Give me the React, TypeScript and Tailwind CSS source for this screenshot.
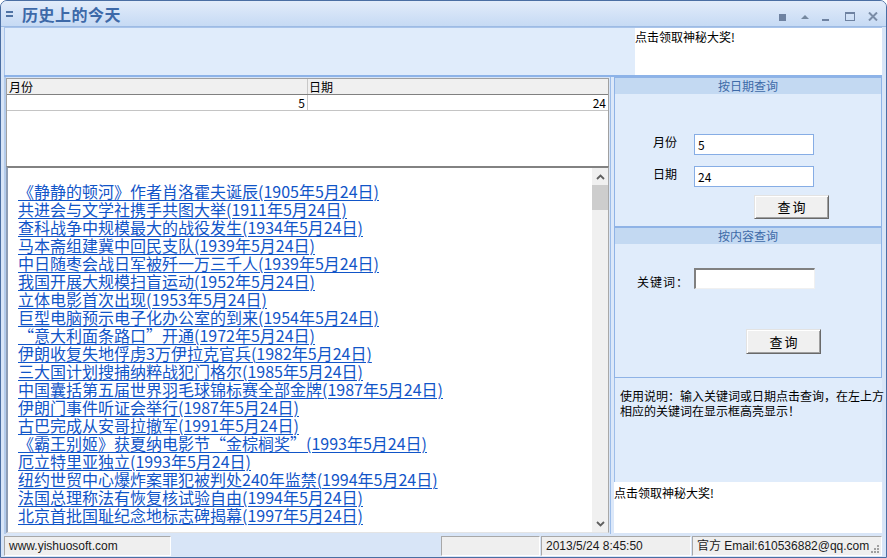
import React from 'react';

const events: string[] = [
  '《静静的顿河》作者肖洛霍夫诞辰(1905年5月24日)',
  '共进会与文学社携手共图大举(1911年5月24日)',
  '查科战争中规模最大的战役发生(1934年5月24日)',
  '马本斋组建冀中回民支队(1939年5月24日)',
  '中日随枣会战日军被歼一万三千人(1939年5月24日)',
  '我国开展大规模扫盲运动(1952年5月24日)',
  '立体电影首次出现(1953年5月24日)',
  '巨型电脑预示电子化办公室的到来(1954年5月24日)',
  '“意大利面条路口”开通(1972年5月24日)',
  '伊朗收复失地俘虏3万伊拉克官兵(1982年5月24日)',
  '三大国计划搜捕纳粹战犯门格尔(1985年5月24日)',
  '中国囊括第五届世界羽毛球锦标赛全部金牌(1987年5月24日)',
  '伊朗门事件听证会举行(1987年5月24日)',
  '古巴完成从安哥拉撤军(1991年5月24日)',
  '《霸王别姬》获夏纳电影节“金棕榈奖”(1993年5月24日)',
  '厄立特里亚独立(1993年5月24日)',
  '纽约世贸中心爆炸案罪犯被判处240年监禁(1994年5月24日)',
  '法国总理称法有恢复核试验自由(1994年5月24日)',
  '北京首批国耻纪念地标志碑揭幕(1997年5月24日)',
];

const TitleBar: React.FC = () => (
  <div className="flex h-[26px] shrink-0 rounded-t-[6px] border-b border-[#9dbbe4] bg-gradient-to-b from-[#e2ecfa] to-[#c6daf4]">
    <div className="ml-[5px] mt-[1px] flex items-center">
      <svg width="7" height="6" viewBox="0 0 7 6" aria-hidden>
        <rect x="0" y="0" width="7" height="2" fill="#4f72a3" />
        <rect x="0" y="4" width="7" height="2" fill="#4f72a3" />
      </svg>
      <span className="ml-[9px] text-[16px] font-bold tracking-[0.5px] text-[#3d69a8]">历史上的今天</span>
    </div>
    <div className="ml-auto mr-[8px] mt-[11px] flex h-[9px] items-end self-start">
      <svg width="7" height="7" viewBox="0 0 7 7" aria-hidden>
        <rect width="7" height="7" fill="#6e82a1" />
      </svg>
      <svg className="mb-[2px] ml-[15px]" width="8" height="5" viewBox="0 0 8 5" aria-hidden>
        <path d="M0 5 L4 1 L8 5 Z" fill="#75889f" />
      </svg>
      <svg className="ml-[13px]" width="7" height="2" viewBox="0 0 7 2" aria-hidden>
        <rect width="7" height="2" fill="#6e82a1" />
      </svg>
      <svg className="ml-[16px]" width="10" height="9" viewBox="0 0 10 9" aria-hidden>
        <rect x="0.5" y="0.5" width="9" height="8" fill="none" stroke="#6e82a1" />
        <rect width="10" height="2" fill="#6e82a1" />
      </svg>
      <svg className="ml-[13px]" width="10" height="9" viewBox="0 0 10 9" aria-hidden>
        <path d="M1 0.5 L9 8.5 M9 0.5 L1 8.5" stroke="#7a8ca6" strokeWidth="2" />
      </svg>
    </div>
  </div>
);

const Button: React.FC<{ className?: string; tall?: boolean }> = ({ className = '', tall }) => (
  <div
    className={`flex w-[75px] items-center justify-center border border-t-[#e3e3e3] border-l-[#e3e3e3] border-r-[#696969] border-b-[#696969] bg-[#f0f0f0] text-[13px] tracking-[2px] shadow-[inset_1px_1px_0_#ffffff,inset_-1px_-1px_0_#a0a0a0] ${tall ? 'h-[25px]' : 'h-[24px]'} ${className}`}
  >
    <span className="pl-[2px]">查询</span>
  </div>
);

const Chevron: React.FC<{ down?: boolean }> = ({ down }) => (
  <svg width="9" height="6" viewBox="0 0 9 6" aria-hidden>
    <path
      d={down ? 'M1 1 L4.5 4.5 L8 1' : 'M1 5 L4.5 1.5 L8 5'}
      fill="none"
      stroke="#5f5f5f"
      strokeWidth="1.8"
    />
  </svg>
);

export default function App() {
  return (
    <div className="h-[558px] w-[887px] overflow-hidden bg-white font-['Noto_Sans_CJK_SC','Noto_Sans',sans-serif] text-[12px] text-black">
      <div className="flex h-full w-full flex-col rounded-t-[7px] border border-[#4a6ea3] bg-[#d8e5f7]">
        <TitleBar />

        <div className="flex flex-1 flex-col pl-[3px] pr-[4px]">
          {/* top strip */}
          <div className="flex h-[50px] border-t border-b-2 border-t-[#a9c4ea] border-b-[#8db3e8]">
            <div className="flex-1 border-l border-[#a9c4ea] bg-[#e0ecfb]" />
            <div className="w-[247px] bg-white pt-[2px] leading-[14px]">点击领取神秘大奖!</div>
          </div>

          {/* middle */}
          <div className="flex h-[457px]">
            <div className="flex w-[606px] flex-col border-l-2 border-[#b3cbeb] py-[1px] pr-[1px]">
              {/* grid */}
              <div className="flex h-[88px] flex-col border-l border-r border-t border-[#a0a0a0] bg-white">
                <div className="flex h-[16px] border-b border-[#808080] bg-[#f0f0f0] leading-[15px]">
                  <div className="w-[301px] border-r border-[#c8c8c8] pl-[2px]">月份</div>
                  <div className="flex-1 pl-[1px]">日期</div>
                </div>
                <div className="flex h-[16px] border-b border-[#c4c4c4] leading-[15px]">
                  <div className="w-[301px] border-r border-[#c8c8c8] pr-[2px] text-right">5</div>
                  <div className="flex-1 pr-[2px] text-right">24</div>
                </div>
              </div>

              {/* list box */}
              <div className="flex h-[367px] border-b border-l-2 border-r border-t-2 border-b-[#e4e4e4] border-l-[#8d9db5] border-r-[#a8a8a8] border-t-[#828282] bg-white">
                <div className="flex-1 overflow-hidden pl-[10px] pt-[14px] text-[16px] leading-[18px] text-[#1155c8]">
                  {events.map((e) => (
                    <div key={e} className="h-[18px] whitespace-nowrap">
                      <span className="underline decoration-1 underline-offset-[2px]">{e}</span>
                    </div>
                  ))}
                </div>
                <div className="flex w-[16px] flex-col bg-[#f0f0f0]">
                  <div className="flex h-[17px] items-center justify-center">
                    <Chevron />
                  </div>
                  <div className="h-[25px] bg-[#cdcdcd]" />
                  <div className="flex-1" />
                  <div className="flex h-[17px] items-center justify-center">
                    <Chevron down />
                  </div>
                </div>
              </div>
            </div>

            {/* separator */}
            <div className="w-[4px] border-l border-[#9dbde9] bg-[#dce8f9]" />

            {/* right column */}
            <div className="flex w-[268px] flex-col">
              <div className="flex h-[150px] flex-col border border-[#8fb3e6] bg-[#e0ecfb]">
                <div className="h-[16px] bg-[#c3d9f2] text-center leading-[16px] text-[#3d6aa8]">按日期查询</div>
                <div className="mt-[40px] flex items-start pl-[38px]">
                  <div className="w-[41px] pt-[1px] leading-[14px]">月份</div>
                  <div className="h-[21px] w-[120px] border border-[#86ade5] bg-white pl-[3px] leading-[19px]">5</div>
                </div>
                <div className="mt-[11px] flex items-start pl-[38px]">
                  <div className="w-[41px] pt-[1px] leading-[14px]">日期</div>
                  <div className="h-[21px] w-[120px] border border-[#86ade5] bg-white pl-[3px] leading-[19px]">24</div>
                </div>
                <Button className="ml-[139px] mt-[8px]" />
              </div>

              <div className="flex h-[151px] flex-col border border-[#8fb3e6] bg-[#e0ecfb]">
                <div className="h-[16px] bg-[#c3d9f2] text-center leading-[16px] text-[#3d6aa8]">按内容查询</div>
                <div className="mt-[24px] flex items-end pl-[22px]">
                  <div className="w-[57px] text-[12px] leading-[14px] tracking-[1px]">关键词：</div>
                  <div className="h-[21px] w-[121px] border-b border-l-2 border-r border-t-2 border-b-[#f0f0f0] border-l-[#808080] border-r-[#f0f0f0] border-t-[#808080] bg-white" />
                </div>
                <Button tall className="ml-[131px] mt-[40px]" />
              </div>

              <div className="h-[104px] whitespace-nowrap border-l border-[#9dbde9] bg-[#e0ecfb] pl-[5px] pt-[10px] leading-[15px]">
                <div>使用说明：输入关键词或日期点击查询，在左上方</div>
                <div>相应的关键词在显示框高亮显示！</div>
              </div>

              <div className="h-[51px] bg-white pt-[4px] leading-[14px]">点击领取神秘大奖!</div>
              <div className="h-[1px]" />
            </div>
          </div>

          {/* status bar */}
          <div className="flex h-[23px] pb-[1px] pt-[2px] font-['Liberation_Sans','Noto_Sans_CJK_SC',sans-serif] text-[12px] leading-[18px] text-[#1a1a1a]">
            <div className="w-[167px] border border-b-white border-l-[#a8a8a8] border-r-white border-t-[#a8a8a8] bg-[#efefef] pl-[4px]">
              www.yishuosoft.com
            </div>
            <div className="flex-1" />
            <div className="w-[99px] border border-b-white border-l-[#a8a8a8] border-r-white border-t-[#a8a8a8] bg-[#efefef]" />
            <div className="ml-[1px] w-[150px] border border-b-white border-l-[#a8a8a8] border-r-white border-t-[#a8a8a8] bg-[#efefef] pl-[4px]">
              2013/5/24 8:45:50
            </div>
            <div className="relative ml-[1px] w-[190px] border border-b-white border-l-[#a8a8a8] border-r-white border-t-[#a8a8a8] bg-[#efefef] pl-[4px]">
              官方 Email:610536882@qq.com
              <svg className="absolute bottom-[1px] right-[1px]" width="10" height="10" viewBox="0 0 10 10" aria-hidden>
                <rect x="7" y="1" width="2" height="2" fill="#a0a0a0" />
                <rect x="4" y="4" width="2" height="2" fill="#a0a0a0" />
                <rect x="7" y="4" width="2" height="2" fill="#a0a0a0" />
                <rect x="1" y="7" width="2" height="2" fill="#a0a0a0" />
                <rect x="4" y="7" width="2" height="2" fill="#a0a0a0" />
                <rect x="7" y="7" width="2" height="2" fill="#a0a0a0" />
              </svg>
            </div>
          </div>
        </div>
      </div>
    </div>
  );
}
